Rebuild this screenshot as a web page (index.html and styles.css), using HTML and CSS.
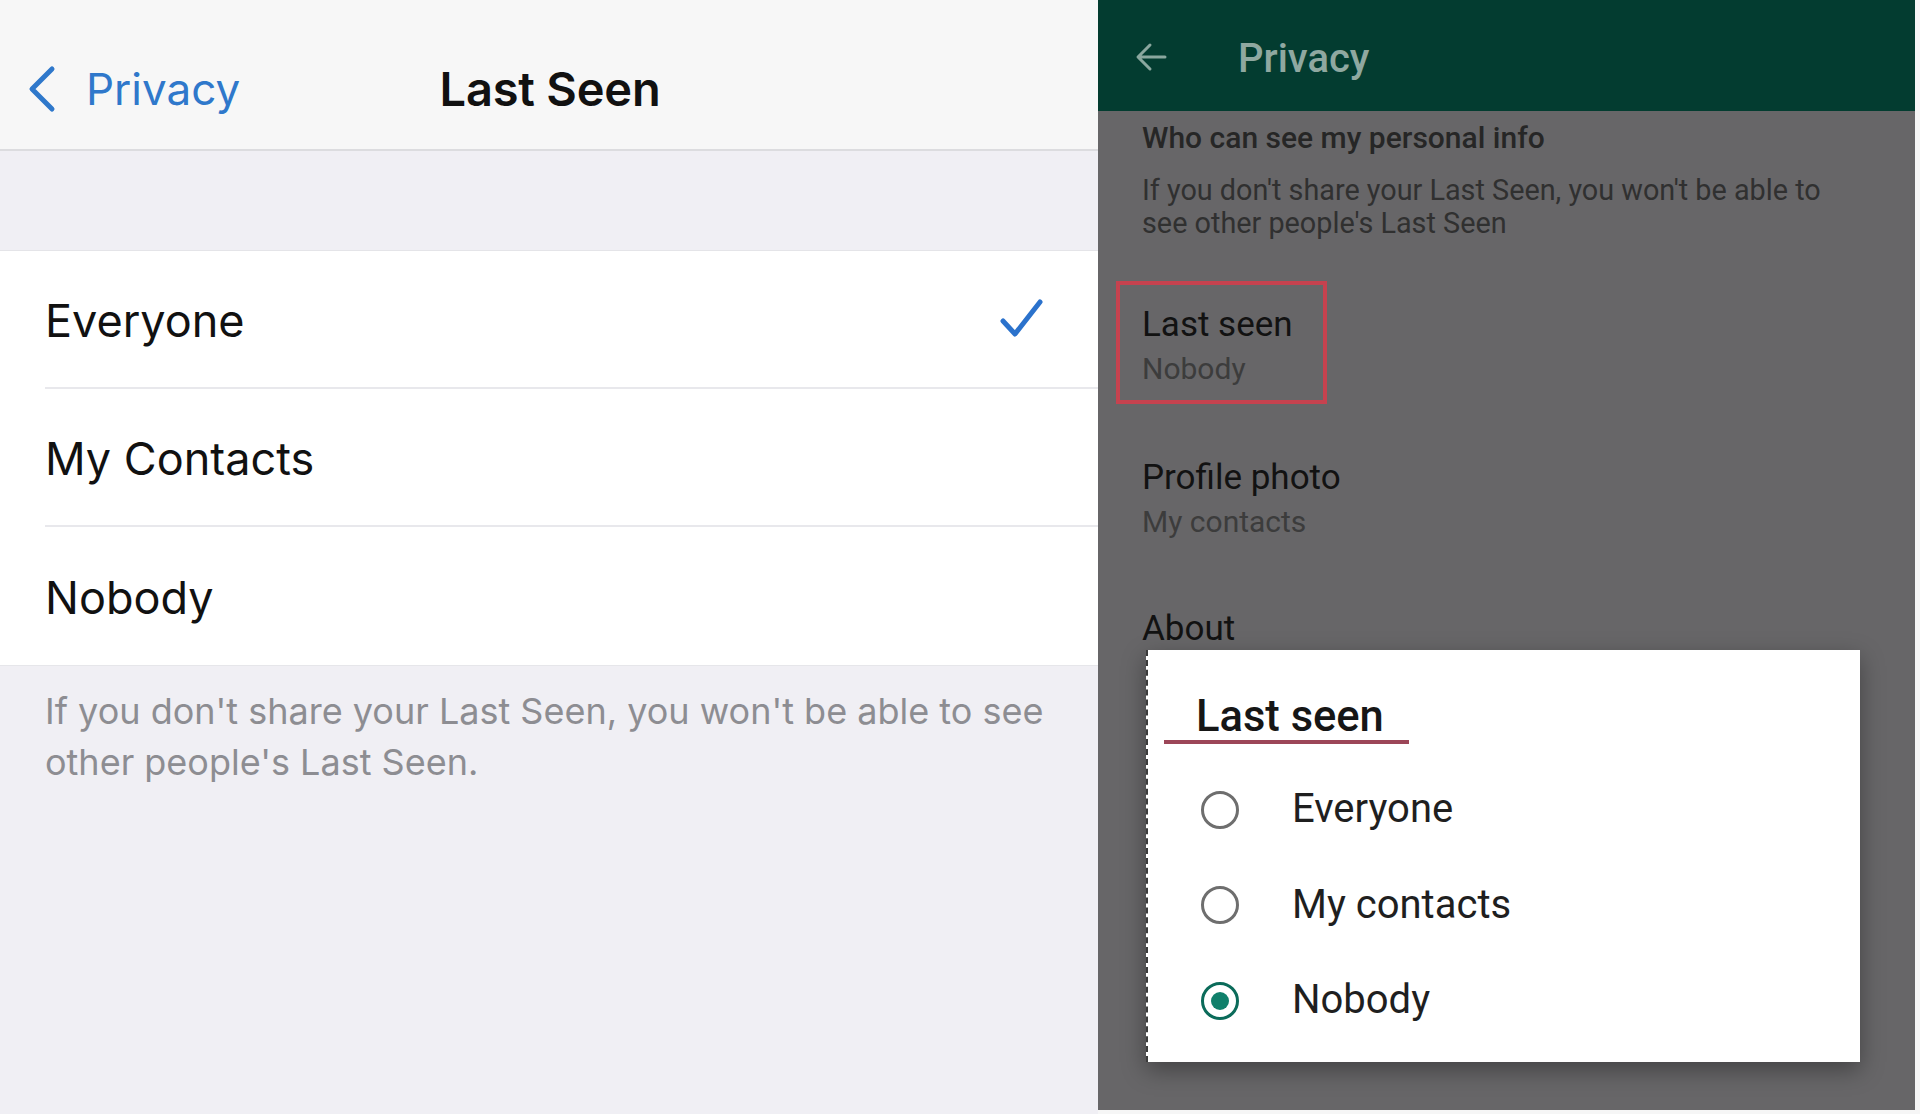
FILE: index.html
```html
<!DOCTYPE html>
<html lang="en">
<head>
<meta charset="utf-8">
<title>Last Seen privacy settings</title>
<link rel="stylesheet" href="styles.css">
</head>
<body>
<div class="page">
  <section class="ios">
    <header class="ios-nav">
      <a class="ios-back">
        <svg class="ios-chevron" width="30" height="48" viewBox="0 0 30 48"><path d="M25 4 L5 24 L25 44" fill="none" stroke="#2f78cb" stroke-width="5" stroke-linecap="round" stroke-linejoin="round"/></svg>
        <span>Privacy</span>
      </a>
      <h1 class="ios-title">Last Seen</h1>
      <span></span>
    </header>
    <div class="ios-gap"></div>
    <ul class="ios-list">
      <li class="ios-row"><span>Everyone</span>
        <svg class="ios-check" width="44" height="42" viewBox="0 0 44 42"><path d="M4 23 L16 36 L41 4" fill="none" stroke="#2b72cc" stroke-width="5" stroke-linecap="round" stroke-linejoin="round"/></svg>
      </li>
      <li class="ios-row"><span>My Contacts</span></li>
      <li class="ios-row"><span>Nobody</span></li>
    </ul>
    <p class="ios-footer">If you don't share your Last Seen, you won't be able to see other people's Last Seen.</p>
  </section>

  <section class="android">
    <header class="wa-bar">
      <svg class="wa-arrow" width="32" height="30" viewBox="0 0 32 30"><path d="M30 15 H4 M15 3 L3 15 L15 27" fill="none" stroke="#8aa79e" stroke-width="3" stroke-linecap="round" stroke-linejoin="round"/></svg>
      <span class="wa-bar-title">Privacy</span>
    </header>
    <div class="wa-body">
      <h2 class="wa-section">Who can see my personal info</h2>
      <p class="wa-desc">If you don't share your Last Seen, you won't be able to see other people's Last Seen</p>
      <div class="wa-item wa-highlight">
        <div class="wa-item-title">Last seen</div>
        <div class="wa-item-sub">Nobody</div>
      </div>
      <div class="wa-item wa-item-next">
        <div class="wa-item-title">Profile photo</div>
        <div class="wa-item-sub">My contacts</div>
      </div>
      <div class="wa-item wa-item-about">
        <div class="wa-item-title">About</div>
      </div>
    </div>

    <div class="wa-dialog">
      <div class="wa-dialog-title">Last seen</div>
      <ul class="wa-options">
        <li class="wa-option"><span class="wa-radio"></span><span>Everyone</span></li>
        <li class="wa-option"><span class="wa-radio"></span><span>My contacts</span></li>
        <li class="wa-option"><span class="wa-radio wa-radio-on"></span><span>Nobody</span></li>
      </ul>
    </div>
  </section>
</div>
</body>
</html>
```

FILE: styles.css
```css
* { box-sizing: border-box; }
html, body { margin: 0; padding: 0; }
body { background: #f6f6f6; width: 1920px; height: 1114px; overflow: hidden; }

.page { display: flex; width: 1920px; height: 1114px; }

/* ---------- iOS panel ---------- */
.ios {
  width: 1098px;
  height: 1114px;
  background: #f0eff4;
  font-family: Inter, "Noto Sans", sans-serif;
  color: #111;
}
.ios-nav {
  height: 151px;
  background: #f7f7f7;
  border-bottom: 2px solid #dcdcdf;
  display: grid;
  grid-template-columns: 1fr auto 1fr;
  align-items: center;
}
.ios-back {
  display: flex;
  align-items: center;
  gap: 29px;
  padding-left: 27px;
  color: #2f78cb;
  font-size: 44px;
  line-height: 1;
  margin-top: 28px;
}
.ios-chevron { flex: none; }
.ios-title {
  margin: 28px 0 0 2px;
  font-size: 47px;
  font-weight: 600;
  letter-spacing: -0.2px;
  color: #111;
}
.ios-gap {
  height: 100px;
  border-bottom: 1px solid #e4e4e8;
}
.ios-list {
  list-style: none;
  margin: 0;
  padding: 0;
  background: #fff;
  border-bottom: 1px solid #e6e6ea;
}
.ios-row {
  margin-left: 45px;
  height: 138px;
  display: flex;
  align-items: center;
  justify-content: space-between;
  padding-right: 55px;
  font-size: 45px;
  border-bottom: 2px solid #e8e8ec;
}
.ios-row:last-child { border-bottom: none; }
.ios-row span { margin-top: 2px; }
.ios-check { flex: none; margin-top: 0; }
.ios-footer {
  margin: 20px 0 0;
  padding: 0 30px 0 45px;
  font-size: 36px;
  line-height: 51px;
  color: #8d8d92;
}

/* ---------- Android panel ---------- */
.android {
  position: relative;
  width: 817px;
  height: 1110px;
  background: #676668;
  font-family: Roboto, "Noto Sans", sans-serif;
}
.wa-bar {
  height: 111px;
  background: #033c30;
  display: flex;
  align-items: center;
  padding-left: 37px;
  gap: 71px;
}
.wa-arrow { flex: none; margin-top: 2px; }
.wa-bar-title {
  color: #8fa8a0;
  font-size: 40px;
  font-weight: 500;
  margin-top: 5px;
}
.wa-body { padding: 0 0 0 44px; }
.wa-section {
  margin: 9px 0 0;
  font-size: 30px;
  line-height: 36px;
  font-weight: 500;
  color: #262626;
}
.wa-desc {
  margin: 18px 0 0;
  font-size: 28.8px;
  line-height: 33px;
  color: #303030;
  width: 720px;
}
.wa-item { display: flex; flex-direction: column; gap: 4px; }
.wa-item-title { font-size: 35px; line-height: 40px; color: #121212; }
.wa-item-sub { font-size: 30px; line-height: 40px; color: #3c3c3c; }
.wa-highlight {
  width: fit-content;
  margin: 41px 0 0 -26px;
  padding: 20px 30px 11px 22px;
  border: 4px solid #c6424f;
}
.wa-item-next { margin-top: 54px; }
.wa-item-about { margin-top: 67px; }

.wa-dialog {
  position: absolute;
  left: 48px;
  top: 650px;
  width: 714px;
  height: 412px;
  background: #fff;
  border-left: 2px dashed #3c3c3c;
  box-shadow: 0 8px 22px rgba(0, 0, 0, 0.35);
  padding-top: 44px;
}
.wa-dialog-title {
  width: fit-content;
  margin-left: 16px;
  padding: 0 25px 0 32px;
  font-size: 43.5px;
  line-height: 46px;
  font-weight: 500;
  color: #161616;
  border-bottom: 4px solid #9c4658;
}
.wa-options { list-style: none; margin: 18px 0 0; padding: 0 0 0 53px; }
.wa-option {
  height: 95.5px;
  display: flex;
  align-items: center;
  gap: 53px;
  font-size: 40px;
  color: #1f1f1f;
}
.wa-option span:last-child { margin-top: -2px; }
.wa-radio {
  width: 38px;
  height: 38px;
  flex: none;
  border-radius: 50%;
  border: 3px solid #6e6e6e;
  display: flex;
  align-items: center;
  justify-content: center;
}
.wa-radio-on { border-color: #0b6b5a; }
.wa-radio-on::after {
  content: "";
  width: 18px;
  height: 18px;
  border-radius: 50%;
  background: #10806b;
}
```
